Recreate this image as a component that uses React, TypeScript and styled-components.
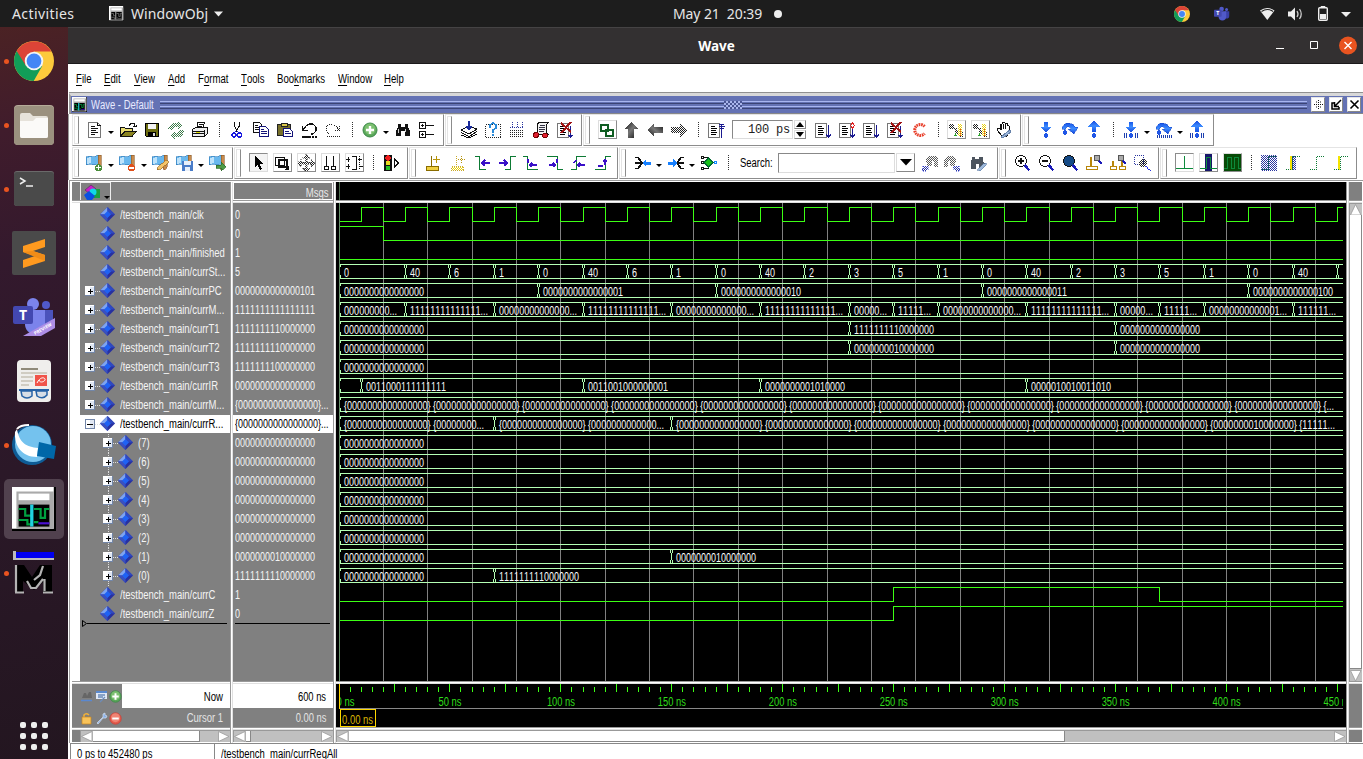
import React from "react";
import styled, { createGlobalStyle, css } from "styled-components";

const Global = createGlobalStyle`
  * { box-sizing: border-box; }
  html, body { margin: 0; padding: 0; background: #fff; overflow: hidden; }
  svg { display: block; flex: none; }
`;

const ui = css`
  font-family: "Liberation Sans", sans-serif;
  font-size: 12px;
  font-kerning: none;
  white-space: nowrap;
`;

/* Condensed text: regular letters squeezed horizontally. */
const Sq = styled.span<{ $k?: number; $right?: boolean }>`
  display: inline-block; white-space: nowrap;
  transform: scaleX(${p => p.$k ?? 0.79});
  transform-origin: ${p => (p.$right ? "right" : "left")} center;
`;

/* ---------- desktop shell ---------- */
const Screen = styled.div`
  width: 1363px; height: 759px; overflow: hidden;
  display: flex; flex-direction: column;
  font-family: "Noto Sans", sans-serif;
`;
const TopBar = styled.header`
  flex: none; height: 27px; background: #1d1d1d; color: #e6e6e6;
  display: grid; grid-template-columns: 1fr auto 1fr; align-items: center;
  font-size: 14px;
`;
const TopGroup = styled.div<{ $end?: boolean }>`
  display: flex; align-items: center; height: 27px;
  justify-content: ${p => (p.$end ? "flex-end" : "flex-start")};
`;
const Activities = styled.span`margin-left: 12px; width: 97px; letter-spacing: 0.4px;`;
const AppName = styled.span`margin: 0 5px 0 7px; letter-spacing: 0.1px;`;
const Clock = styled.div`
  display: flex; align-items: center; gap: 12px; white-space: pre; letter-spacing: -0.1px; padding-left: 93px; width: 203px;
`;
const ClockDot = styled.i`width: 8px; height: 8px; border-radius: 50%; background: #eee;`;
const TrayGap = styled.i`width: 24px;`;
const Below = styled.div`flex: 1; display: flex; min-height: 0;`;
const Dock = styled.nav`
  width: 68px; flex: none; padding-top: 2px;
  background: linear-gradient(170deg, #4b2224 0%, #401c2c 14%, #33192d 32%, #2b1828 60%, #231620 100%);
  display: flex; flex-direction: column;
`;
const DockItem = styled.div`
  height: 64px; flex: none; display: flex; align-items: center;
`;
const RunDot = styled.i<{ $on?: boolean }>`
  width: 5px; height: 5px; margin-left: 4px; border-radius: 50%; flex: none;
  background: ${p => (p.$on ? "#e95420" : "transparent")};
`;
const DockTile = styled.div<{ $active?: boolean }>`
  width: 60px; height: 60px; margin-left: -5px; border-radius: 5px;
  display: flex; align-items: center; justify-content: center;
  background: ${p => (p.$active ? "#51414e" : "transparent")};
`;
const AppsGrid = styled.div`
  margin-top: auto; margin-bottom: 9px; padding-left: 20px;
  display: grid; grid-template-columns: repeat(3, 6px); gap: 5px;
  i { width: 6px; height: 6px; border-radius: 2px; background: #eee; }
`;

/* ---------- window ---------- */
const Win = styled.main`flex: 1; min-width: 0; display: flex; flex-direction: column; background: #fff;`;
const TitleBar = styled.div`
  height: 37px; flex: none; background: #333031; border-top: 1px solid #454344; border-bottom: 1px solid #1c1a1b;
  display: grid; grid-template-columns: 1fr auto 1fr; align-items: center; color: #fff;
  font-weight: 700; font-size: 13.5px; letter-spacing: 0;
`;
const WinTitle = styled.span`padding-left: 2px;`;
const WinButtons = styled.div`display: flex; justify-content: flex-end; align-items: center; padding-right: 5px;`;
const MenuBar = styled.div`
  ${ui}
  height: 29px; flex: none; padding-left: 8px; display: flex; align-items: center; color: #000;
`;
const MenuItem = styled.div<{ $w: number }>`
  width: ${p => p.$w}px; flex: none;
  u { text-underline-offset: 2px; }
`;
const Head = styled.div`
  ${ui}
  height: 21px; flex: none; background: #6472b4; border-top: 3px solid #d8d8d8; border-bottom: 1px solid #888;
  box-shadow: 0 -1px 0 #909090; border-left: 2px solid #999;
  margin-left: 1px;
  display: flex; align-items: center; padding: 0 2px 0 1px; color: #e8ebff;
`;
const HeadTitle = styled.div`width: 67px; margin-left: 4px; flex: none;`;
const HeadGrip = styled.div`
  flex: 1; height: 8px; margin: 0 0 0 2px; display: flex; flex-direction: column; justify-content: space-between;
`;
const GripLine = styled.i`height: 3px; background: #6472b4; border-top: 1px solid #a9b6f0; border-bottom: 1px solid #3b4475;`;
const GripDots = styled.i`
  position: absolute; left: 724px; top: 101px; width: 18px; height: 8px;
  background: repeating-conic-gradient(#a9b5ec 0 25%, #4a5694 0 50%) 0 0 / 4px 4px;
`;
const HeadBtn = styled.div`
  width: 14px; height: 15px; margin-left: 4px; flex: none; background: #fff; border: 1px solid #e6e6e6; border-right-color: #888; border-bottom-color: #888;
  display: flex; align-items: center; justify-content: center;
`;
const BarRow = styled.div`height: 33px; flex: none; display: flex; padding-left: 3px; border-left: 1px solid #999;`;
const Bar = styled.div<{ $w: number; $pad: number }>`
  width: ${p => p.$w}px; flex: none; height: 32px; margin-right: 1px;
  display: flex; align-items: center; overflow: hidden;
  border: 1px solid #e4e4e4; border-right: 1px solid #8c8c8c; border-bottom: 1px solid #8c8c8c;
  padding-bottom: 1px;
  &::before {
    content: ""; flex: none; width: 3px; height: 26px; margin: 0 ${p => p.$pad - 4}px 0 1px;
    border: 1px solid #e4e4e4; border-right-color: #8c8c8c;
  }
`;
const Slot = styled.div<{ $w?: number }>`
  width: ${p => p.$w ?? 24}px; height: 26px; flex: none; display: flex; align-items: center; justify-content: center;
`;
const BoxBtn = styled.div<{ $down?: boolean }>`
  width: 19px; height: 19px; display: flex; align-items: center; justify-content: center; overflow: hidden;
  border: 1px solid; border-color: ${p => (p.$down ? "#8c8c8c #ddd #ddd #8c8c8c" : "#ddd #8c8c8c #8c8c8c #ddd")};
  background: ${p => (p.$down ? "#f4f4f4" : "#fff")};
`;
const Dots = styled.i`
  width: 1px; height: 16px; margin-left: 2px; background: repeating-linear-gradient(#333 0 1px, transparent 1px 2px);
`;
const Caret = styled.i`
  border: 3px solid transparent; border-top: 3px solid #000; border-bottom: 0; margin-top: 5px; margin-right: 1px;
`;
const TimeInput = styled.div`
  width: 61px; height: 19px; flex: none; margin-left: 4px; border: 1px solid; border-color: #888 #ddd #ddd #888;
  font: 12px/18px "Liberation Mono", monospace; text-align: right; padding-right: 2px; letter-spacing: -0.2px; color: #222;
`;
const Spin = styled.div`
  width: 12px; height: 19px; margin-left: 1px; margin-right: 5px; flex: none; display: flex; flex-direction: column; gap: 1px;
  i { flex: 1; border: 1px solid #ddd; border-right-color: #888; border-bottom-color: #888; display: flex; align-items: center; justify-content: center; }
`;
const SearchLabel = styled.label`${ui} width: 38px; margin-left: 6px; flex: none;`;
const SearchBox = styled.div`width: 117px; height: 20px; flex: none; border: 1px solid; border-color: #888 #ddd #ddd #888;`;
const SearchDrop = styled.div`
  width: 19px; height: 19px; flex: none; margin-left: 1px; margin-right: 4px; border: 1px solid; border-color: #ddd #888 #888 #ddd;
  display: flex; align-items: center; justify-content: center;
`;

/* ---------- wave panes ---------- */
const Panes = styled.div`
  height: 563px; flex: none; display: flex; padding: 1px 0 0 2px; margin-left: 1px;
  border-left: 1px solid #999; border-top: 1px solid #999;
`;
const Col = styled.section<{ $w: number }>`
  ${ui}
  width: ${p => p.$w}px; flex: none; display: flex; flex-direction: column;
`;
const Sash = styled.i`width: 3px; flex: none; background: #fff; border-left: 1px solid #999; border-right: 1px solid #e0e0e0;`;
const HSash = styled.i`height: 3px; flex: none; background: #fff; border-top: 1px solid #999; border-bottom: 1px solid #e0e0e0;`;
const ColHead = styled.div<{ $dark?: boolean; $frame?: boolean }>`
  height: 18px; flex: none; background: ${p => (p.$dark ? "#000" : "#808080")}; color: #e8e8e8;
  ${p => p.$frame && "border: 1px solid #fff; text-align: right; padding-right: 3px; line-height: 20px;"}
  display: ${p => (p.$frame ? "block" : "flex")};
`;
const HeadChip = styled.div`
  width: 31px; height: 18px; margin-left: 8px; border: 1px solid #eee; border-bottom: 0; display: flex; align-items: flex-end;
`;
const ColBody = styled.div<{ $gutter?: boolean }>`
  height: 478px; flex: none; background: #808080; padding-top: 3px;
  ${p => p.$gutter && "border-left: 8px solid #fff;"}
`;
const Row = styled.div<{ $sel?: boolean }>`
  height: 19px; display: flex; align-items: flex-start; line-height: 18px;
  color: ${p => (p.$sel ? "#000" : "#f4f4f4")};
  background: ${p => (p.$sel ? "#fff" : "transparent")};
  background-clip: content-box; padding-bottom: 1px;
`;
const Value = styled(Sq)`margin-left: 2px; flex: none;`;
const EndLine = styled.div<{ $l: number; $r: number }>`height: 1px; background: #000; margin: -1px ${p => p.$r}px 0 ${p => p.$l}px;`;
const EndMark = styled.div`display: flex; align-items: center; height: 7px; margin: -4px 3px 0 2px; i { flex: 1; height: 1px; background: #000; }`;
const Foot = styled.div`height: 43px; flex: none; background: #808080; display: flex; flex-direction: column;`;
const FootLine = styled.div<{ $white?: boolean; $h: number }>`
  height: ${p => p.$h}px; display: flex; align-items: center;
  color: ${p => (p.$white ? "#000" : "#e4e4e4")};
`;
const FootIcons = styled.div`width: 50px; height: 100%; flex: none; display: flex; align-items: center; gap: 1px; padding: 1px 0 0 8px;`;
const FootText = styled.div<{ $white?: boolean; $h: number }>`
  flex: 1; height: ${p => p.$h}px; line-height: ${p => p.$h + 2}px; text-align: right; padding-right: 7px;
  background: ${p => (p.$white ? "#fff" : "transparent")};
`;
const Scroll = styled.div<{ $vertical?: boolean }>`
  flex: ${p => (p.$vertical ? "none" : "1")}; ${p => (p.$vertical ? "height: 478px; width: 13px; flex-direction: column;" : "height: 12px;")}
  background: #c0c0c0; display: flex; border-top: 1px solid #999; border-left: 1px solid #999;
`;
const Thumb = styled.i<{ $size: number; $vertical?: boolean }>`
  flex: none; ${p => (p.$vertical ? `height: ${p.$size}px; width: 12px;` : `width: ${p.$size}px;`)}
  background: #fff; border-right: 1px solid #888; border-bottom: 1px solid #888;
`;
const ScrollRow = styled.div<{ $gutter?: boolean }>`
  height: 12px; display: flex; background: #808080; ${p => p.$gutter && "padding-left: 8px;"}
`;
const Spacer = styled.i`flex: 1;`;
const GrayBlock = styled.i<{ $h: number }>`height: ${p => p.$h}px; background: #808080; flex: none;`;
const Status = styled.footer`
  ${ui}
  flex: 1; display: flex; margin-left: 2px; border-top: 1px solid #888; border-left: 1px solid #888; line-height: 21px;
`;
const StatusCell = styled.div<{ $w?: number }>`
  ${p => (p.$w ? `width: ${p.$w}px; flex: none; border-right: 1px solid #888;` : "flex: 1;")} padding-left: 6px;
`;

/* ---------- icons ---------- */
const Ic = ({ children, w = 20 }: { children: React.ReactNode; w?: number }) => (
  <svg width={w} height={20} viewBox={`0 0 ${w} 20`} shapeRendering="crispEdges" fill="none">{children}</svg>
);
const Defs = styled.svg`position: absolute;`;
const Patterns = () => (
  <Defs width="0" height="0">
    <defs>
      {[["ck", "#222"], ["cb", "#2a35a0"], ["cr", "#e32818"], ["cg", "#3d7a4a"], ["cy", "#e8d010"]].map(([id, c]) => (
        <pattern key={id} id={id} width="2" height="2" patternUnits="userSpaceOnUse">
          <rect width="1" height="1" fill={c} /><rect x="1" y="1" width="1" height="1" fill={c} />
        </pattern>
      ))}
      <linearGradient id="steel" x1="0" y1="0" x2="1" y2="1"><stop offset="0" stopColor="#111" /><stop offset=".5" stopColor="#777" /><stop offset="1" stopColor="#111" /></linearGradient>
      <linearGradient id="blu" x1="0" y1="0" x2="0" y2="1"><stop offset="0" stopColor="#1553e8" /><stop offset=".5" stopColor="#3c8cff" /><stop offset="1" stopColor="#1546dc" /></linearGradient>
    </defs>
  </Defs>
);
const Page = ({ x = 2 }: { x?: number }) => (
  <g>
    <path d={`M${x + .5} 3.5h11v14h-11z`} fill="#fff" stroke="#777" />
    <path d={`M${x + 3} 6.5h4M${x + 3} 8.5h6M${x + 3} 10.5h5M${x + 3} 12.5h6M${x + 3} 14.5h5`} stroke="#000" />
  </g>
);
const DocI = () => <Ic><path d="M3.500 2.500h9l3 3v12h-12z" stroke="#777" fill="#fff" /><path d="M12.500 2.500v3h3M6 6.500h4M6 8.500h7M6 10.500h5M6 12.500h7M6 14.500h4" stroke="#111" /></Ic>;
const OpenI = () => <Ic><path d="M2.500 7.500h4l1 1h7v3h-8l-4 5z" fill="#e8dc70" stroke="#111" /><path d="M3 16.500l4-5h11l-4 5z" fill="#8a8420" stroke="#111" /><path d="M11 5.500l2-2h3l1 3M15 6.500h3v-2" stroke="#111" /></Ic>;
const SaveI = () => <Ic><path d="M3.500 3.500h13v13h-12l-1-1z" fill="#6d6d10" stroke="#000" /><path d="M6 4h8v5H6z" fill="#f4f4f4" /><path d="M6 12h8v4H6z" fill="#000" /><path d="M11 13h2v3h-2z" fill="#ddd" /></Ic>;
const RefreshI = () => <Ic><path d="M2 9l1-3 3-3h6V1l5 4-5 4V7H8l-2 3z" fill="url(#cg)" /><path d="M18 10l-1 4-3 3H9v2l-5-4 5-4v2h3l2-3z" fill="url(#cg)" /></Ic>;
const PrintI = () => <Ic><path d="M7.500 8V2.500h7L13 8" fill="#fff" stroke="#111" /><path d="M2.500 9.500l3-2h12v6l-3 3h-12z" fill="#eee" stroke="#111" /><path d="M3 11.500h11M3 13.500h11M14.500 10v6M9 4.500h4M8 6.500h4" stroke="#111" /><path d="M6 12h4" stroke="#dd0" /></Ic>;
const CutI = () => <Ic><path d="M7.500 2v4l2 4v2M12.500 2v4l-3 4" stroke="#111" strokeWidth="1.300" /><circle cx="7" cy="15" r="2" stroke="#1a1ae0" strokeWidth="1.600" /><circle cx="12.500" cy="15" r="2" stroke="#1a1ae0" strokeWidth="1.600" /><path d="M9 11l-2 2M10 11l2 2" stroke="#1a1ae0" /></Ic>;
const CopyI = () => <Ic><path d="M2.500 2.500h6l2 2v8h-8z" fill="#fff" stroke="#111" /><path d="M4 5.500h3M4 7.500h5M4 9.500h5" stroke="#111" /><path d="M8.500 6.500h6l3 3v7h-9z" fill="#fff" stroke="#14147a" /><path d="M10 9.500h3M10 11.500h6M10 13.500h6" stroke="#14147a" /></Ic>;
const PasteI = () => <Ic><path d="M2.500 4.500h13v11h-13z" fill="#77702a" stroke="#222" /><path d="M6 3.500h6v3H6z" fill="#ddc94a" stroke="#222" /><path d="M8.500 8.500h6l3 3v5h-9z" fill="#fff" stroke="#14147a" /><path d="M10 11.500h4M10 13.500h6" stroke="#14147a" /></Ic>;
const UndoI = () => <Ic><path d="M3.500 6v4.500h5M4 10l3-4 3-2h4l3 3v4l-3 3h-2" stroke="#111" strokeWidth="1.200" /><path d="M3 16.500h9M13 16.500h2M16 16.500h2" stroke="#111" strokeWidth="2" /></Ic>;
const RedoI = () => <Ic><path d="M16.500 6v4.500h-5M16 10l-3-4-3-2H6L3 7v4l3 3" stroke="#222" strokeDasharray="1 1" /><path d="M4 16.500h14" stroke="#222" strokeDasharray="1 1" /></Ic>;
const AddI = ({ s = 20, red = false }: { s?: number; red?: boolean }) => (
  <svg width={s} height={s} viewBox={s < 20 ? "2 2 16 16" : "0 0 20 20"}><circle cx="10" cy="10" r="7" fill={red ? "#e45b4c" : "#5aa65a"} stroke={red ? "#c8423a" : "#3c8a48"} /><circle cx="10" cy="9" r="5.500" fill={red ? "#f08474" : "#7cc070"} />
    <path d={red ? "M6 10h8" : "M6 10h8M10 6v8"} stroke="#fff" strokeWidth="2.400" /></svg>
);
const Binoc = ({ c = "#111" }: { c?: string }) => <Ic><path d="M5 4h3v3h4V4h3v3l2 4v5h-5v-5H8v5H3v-5l2-4z" fill={c} /><path d="M5 9v4M12.500 9v3" stroke="#fff" strokeWidth=".8" /></Ic>;
const ExpandI = () => <Ic><path d="M2.500 2.500h6v6h-6zM2.500 11.500h6v6h-6zM9 5.500h8M9 14.500h8M4 5.500h3M4 14.500h3M5.500 4v3M5.500 13v3" stroke="#111" /></Ic>;
const StackI = () => <Ic><path d="M2 10l8-4 8 3-8 5zM2 12.500l8 4 8-5M2 15l8 3 8-4" stroke="#111" fill="none" /><path d="M10 1v7M7.500 6l2.500 3 2.500-3" stroke="#1a2a9a" strokeWidth="2" /></Ic>;
const QueryI = () => <Ic><path d="M2.500 4.500h15v13h-15z" stroke="#222" strokeDasharray="1 1" /><path d="M7 8V5l3-2 3 2v3l-3 2v3M10 14v2" stroke="#2a8ad8" strokeWidth="1.800" /></Ic>;
const GridI = () => <Ic><path d="M3 10.500h14M3 12.500h14M3 14.500h14M3 16.500h14" stroke="#222" strokeDasharray="1 1" /><path d="M5.500 2v6M10.500 2v6M15.500 2v6" stroke="#2a35a0" strokeDasharray="1 1" /><path d="M3 7.500h14" stroke="#2a35a0" strokeDasharray="1 1" /></Ic>;
const ScrollI = () => <Ic><path d="M6.500 3.500l2-1h9l-2 2v8l2 2h-11z" fill="#f1f1f1" stroke="#111" /><path d="M9 5.500h5M8 7.500h6M8 9.500h6M8 11.500h5" stroke="#334" /><circle cx="5" cy="15" r="2.500" fill="#e02030" stroke="#700" /><circle cx="14" cy="15.500" r="2.500" fill="#e02030" stroke="#700" /></Ic>;
const DocX = () => <Ic><Page /><path d="M15.500 6v11M13.500 15l2 2.500 2-2.500" stroke="#1a1a90" /><path d="M6 3l10 9M16 2L6 13" stroke="#a01515" strokeWidth="2" /></Ic>;
const ChainI = () => <Ic><path d="M4 4.500h7v6H4zM9 9.500h7v6H9z" stroke="#0f5d22" strokeWidth="2" /></Ic>;
const ArrowI = ({ r = 0, f = "url(#steel)" }: { r?: number; f?: string }) => <Ic><g transform={`rotate(${r} 10 10)`}><path d="M10 2l7 7h-4v9H7V9H3z" fill={f} /></g></Ic>;
const DocArr = ({ up, dot }: { up?: boolean; dot?: boolean }) => (
  <Ic><Page />{up ? <path d="M15.500 4v14M12.500 6.500h6M13 4.500h5M13.500 8h4" stroke="#1a1a90" /> : <path d="M15.500 5v12M13 14.500l2.500 3 2.500-3" stroke="#1a1a90" strokeWidth="1.300" />}
    {dot && <path d="M15.500 3l2 2.500-2 2.500-2-2.500z" fill="#fff" stroke="#e02020" />}</Ic>
);
const RedC = () => <svg width="20" height="20" viewBox="0 0 20 20"><path d="M15.500 6.500A5.500 5.500 0 1 0 15.500 13.500" fill="none" stroke="#e8402c" strokeWidth="3" strokeDasharray="1.600 .7" /></svg>;
const ProbeI = () => <Ic><path d="M3 4h5v4h3v3h6v6h-3v-3H9V9H3z" fill="url(#ck)" /><path d="M12 4h4v12h-4z" fill="url(#cy)" /><path d="M8 15h3M9 13v3" stroke="#29a329" /><path d="M14.500 9v7" stroke="#d33" strokeDasharray="1 1" /></Ic>;
const HandI = () => <Ic><path d="M3 10l1-2 2 1V5l2-1V3l2-1 1 1 2 0v2l2 1v6l-2 4H8z" fill="#fff" stroke="#111" /><path d="M7.500 5v5M9.500 4v5M11.500 4v5" stroke="#111" /><path d="M7 17l6-5 3-2 1 2-3 2-5 4z" fill="#9db8dd" stroke="#6682aa" /></Ic>;
const BArrow = ({ up, bars }: { up?: boolean; bars?: boolean }) => (
  <Ic><g transform={up ? "translate(0 13) scale(1 -1)" : ""}><path d="M8 1.500h4v5h4l-6 6-6-6h4z" fill="url(#blu)" /></g>
    <circle cx="10" cy="15.500" r="2.300" fill="#1f55e6" />{bars && <path d="M3.500 13v5M5.500 13v5M14.500 13v5M16.500 13v5" stroke="#1d3fb0" />}</Ic>
);
const BLoop = ({ bars }: { bars?: boolean }) => <Ic><path d="M2 9c1-7 10-8 13-2h3l-4 7-6-5h3c-2-4-6-2-6 1z" fill="url(#blu)" stroke="#1546c8" strokeWidth=".5" /><circle cx="5" cy="12.500" r="2.200" fill="#1f55e6" />{bars && <path d="M3.500 15v3M5.500 15v3M7.500 15v3M9.500 15v3M11.500 15v3M13.500 15v3M15.500 15v3M17.500 15v3" stroke="#1d3fb0" />}</Ic>;
const MarkI = ({ kind }: { kind: "add" | "del" | "edit" | "save" | "go" }) => (
  <Ic><path d="M1 4l4-1 4 1 4-2v9l-4 1-4-1-4 1z" fill="#69b8ee" stroke="#2d78b8" strokeWidth=".6" /><path d="M2 5l4-1v6l-4 1z" fill="#bfe3fb" /><path d="M13 2h3v12l-2 3-2-1 1-4z" fill="#c88b4c" stroke="#8a5a28" strokeWidth=".6" />
    {kind === "add" && <g><circle cx="13.500" cy="14.500" r="3.500" fill="#4b8f3c" /><path d="M11 14.500h5M13.500 12v5" stroke="#fff" /></g>}
    {kind === "del" && <g><circle cx="13.500" cy="14.500" r="3.500" fill="#e0501c" /><path d="M11 14.500h5" stroke="#fff" strokeWidth="2" /></g>}
    {kind === "edit" && <path d="M6 17l1-3 8-7 3 2-8 7z" fill="#f3c46a" stroke="#9a6a20" strokeWidth=".7" />}
    {kind === "save" && <g><path d="M7 8h11v10H7z" fill="#4a7cc8" /><path d="M9 8h7v4H9zM10 14h5v4h-5z" fill="#e9f0fa" /></g>}
    {kind === "go" && <path d="M8 12h5V9l5 5-5 4v-3H8z" fill="#4e9a46" stroke="#2c6a2a" strokeWidth=".7" />}</Ic>
);
const PointerI = () => <Ic><path d="M7 3v11l2.500-2.500L12 17l2-1-2.500-5H15z" fill="#000" /></Ic>;
const ZoomModeI = () => <Ic><path d="M3.500 4.500h9v8h-9z" stroke="#111" /><path d="M7 7h8v7H7z" stroke="#111" strokeWidth="2" /><path d="M12 17h5v-5z" fill="#111" /></Ic>;
const PanI = () => <Ic><path d="M10 1l4 4h-3v4h4V6l4 4-4 4v-3h-4v4h3l-4 4-4-4h3v-4H5v3l-4-4 4-4v3h4V5H6z" fill="url(#ck)" stroke="#555" strokeWidth=".6" strokeDasharray="1 1" /></Ic>;
const TwoCur = () => <Ic><path d="M6.500 3v11M13.500 3v11M4.500 13.500h4v3h-4zM11.500 13.500h4v3h-4z" stroke="#111" /></Ic>;
const EditWave = () => <Ic><path d="M2 6.500h4M4.500 4v5M2 13.500h4M4.500 11v5M14 6.500h4M14.500 13.500h4" stroke="#111" /><path d="M7.500 3.500h5v13h-5" stroke="#111" /><path d="M15.500 3v14" stroke="#111" strokeDasharray="1 1" /></Ic>;
const Traffic = () => <Ic><path d="M3 2h8v16H3z" fill="#111" /><circle cx="7" cy="5" r="2.600" fill="#ee1c1c" /><circle cx="7" cy="10" r="2.300" fill="#e6dc20" /><circle cx="7" cy="15" r="2.300" fill="#25c025" /><path d="M13.500 6v8l4-4z" stroke="#111" fill="#fff" /></Ic>;
const BaseCur = ({ dim }: { dim?: boolean }) => <Ic><path d="M8.500 3v11M3.500 13.500h12v4h-12z" stroke={dim ? "#c9a92a" : "#8b6d00"} strokeWidth="1.600" fill="none" strokeDasharray={dim ? "1 1" : "none"} /><path d="M4 14h11v3H4z" fill={dim ? "url(#cy)" : "#f0d040"} /><path d="M10 6.500h7M13.500 3v7" stroke="#b8960c" strokeDasharray={dim ? "1 1" : "none"} /></Ic>;
const Edge = ({ d, a }: { d: string; a: string }) => <Ic><path d={d} stroke="#0d7a34" strokeWidth="1" /><path d={a} stroke="#3a10c8" strokeWidth="1.500" /></Ic>;
const JoinI = ({ flip }: { flip?: boolean }) => (
  <Ic><g transform={flip ? "translate(20 0) scale(-1 1)" : ""}><path d="M2 4.500h3l3 4v3l-3 4H2M2 10h8" stroke="#111" strokeWidth="1.700" /></g><path d={flip ? "M2 8.500h5V6l4 4-4 4v-2.500H2z" : "M18 8.500h-5V6l-4 4 4 4v-2.500h5z"} fill="#1680ff" /></Ic>
);
const NodeI = () => <Ic><path d="M2.500 3.500h2v2h-2zM2.500 8.500h2v2h-2zM2.500 14.500h2v2h-2zM5 4.500h4v3M5 9.500h4M5 15.500h4v-3M12 9.500h4" stroke="#111" /><path d="M9.500 5l4.500 4.500L9.500 14 5 9.500z" fill="#18c018" stroke="#063" /><path d="M15.500 8.500h2v2h-2z" stroke="#18f" /></Ic>;
const FindDir = ({ flip }: { flip?: boolean }) => <Ic><g transform={flip ? "translate(20 0) scale(-1 1)" : ""}><path d="M6 5l3-2h6l3 3v8h-4V8h-2v5l-5 0z" fill="url(#ck)" opacity=".75" /><path d="M3 13h5l1 3-3 2H2z" fill="url(#cb)" stroke="#2a35e0" strokeWidth=".5" strokeDasharray="1 1" /></g></Ic>;
const FindOpt = () => <Ic><path d="M4 4h3v2h4V4h4v4l2 3-2 4h-4v-4H8v5H3v-6z" fill="#4c545e" /><path d="M9 17l6-6 3-1v2l-6 6z" fill="#9fb9da" stroke="#5a7aa5" strokeWidth=".6" /></Ic>;
const Lens = ({ kind }: { kind: string }) => <Ic><circle cx="9" cy="8" r="5.500" fill={kind === "full" ? "#154a86" : "#fff"} stroke="#111" /><path d="M12.500 12l5 5.500" stroke="#1a1ab8" strokeWidth="2.500" />{kind !== "full" && <path d={kind === "in" ? "M6 8h6M9 5v6" : "M6 8h6"} stroke="#111" strokeWidth="1.800" />}</Ic>;
const LensCur = ({ two }: { two?: boolean }) => <Ic>{two ? <path d="M5 8v6M2.500 13.500h6v3h-6zM14 6v8M11.500 13.500h6v3h-6z" stroke="#b8860b" strokeWidth="1.600" /> : <path d="M7 4v9M2.500 13.500h11v3h-11z" stroke="#b8860b" strokeWidth="1.600" />}<circle cx="13" cy="5" r="3" fill="#aaa" stroke="#555" /><path d="M15 8l3 3" stroke="#1a1ab8" strokeWidth="1.500" /></Ic>;
const LensBox = () => <Ic><path d="M2.500 2.500h9v9h-9z" stroke="#2a35a0" strokeDasharray="1 1" /><circle cx="11" cy="10" r="4" fill="url(#ck)" /><path d="M14 13l4 5" stroke="#2a35e0" strokeWidth="2" strokeDasharray="1 1" /></Ic>;
const CursorWave = ({ bg, two }: { bg?: string; two?: boolean }) => <svg width="17" height="17" viewBox="0 0 17 17" shapeRendering="crispEdges" fill="none"><rect width="17" height="17" fill={two ? "#064a06" : "#fff"} />{bg && !two && <path d="M5 0h7v17H5z" fill={bg} />}<path d={two ? "M0 14.500h3v-11h4v11h3v-11h4v11h3" : bg ? "M0 14.500h6v-11h4v11h7" : "M0 14.500h17M8.500 2v13"} stroke="#0d8a3c" /></svg>;
const Step = ({ y, full, b }: { y?: boolean; full?: boolean; b?: boolean }) => <Ic>{full && <rect x="2" y="2" width="16" height="16" fill="url(#cb)" />}{b && <rect x="8" y="3" width="5" height="14" fill="url(#cb)" />}{y && <path d="M7.500 3v14" stroke="#f4e400" strokeWidth="2" />}<path d="M3 16.500h6.500v-13H17" stroke="#0d7a34" strokeDasharray="1 1" /></Ic>;

const Boxed = styled.svg<{ $bg: string }>`background: ${p => p.$bg};`;
const WaveMini = ({ s = 15, dim }: { s?: number; dim?: boolean }) => (
  <Boxed $bg="#000" width={s} height={s} viewBox="0 0 20 20">
    <path d="M0 0h19v19H0z" fill="#fff" /><path d="M2 2h17v17H2z" fill="#aaa" /><path d="M3 3h14v3H3z" fill="#fff" /><path d="M3 8h14v10H3z" fill="#000" />
    <path d="M3 10h3v3h3M3 15h4v2h2M10 10h3v4h2v-4h2M10 16h2" stroke={dim ? "#777" : "#00a040"} fill="none" strokeWidth="1" /><path d="M9 8v10" stroke={dim ? "#999" : "#20d0e0"} strokeWidth="1.500" /><path d="M12 16.500h5" stroke={dim ? "#666" : "#4a10d0"} />
  </Boxed>
);
const Chrome = ({ s }: { s: number }) => (
  <svg width={s} height={s} viewBox="0 0 40 40">
    <circle cx="20" cy="20" r="20" fill="#fdca3c" /><path d="M2.700 10a20 20 0 0 0 17 30l8.500-15L20 20l-8-1z" fill="#119d58" /><path d="M2.700 10L12 25l8-14.500h17.300A20 20 0 0 0 2.700 10z" fill="#dc4437" />
    <circle cx="20" cy="20" r="9.300" fill="#f4f4f4" /><circle cx="20" cy="20" r="7.400" fill="#4486f5" />
  </svg>
);
const Teams = ({ s, preview }: { s: number; preview?: boolean }) => (
  <svg width={s} height={s} viewBox="0 0 42 42">
    <circle cx="20" cy="8" r="6" fill={preview ? "#7b83eb" : "#5059c9"} /><circle cx="33" cy="9" r="4" fill="#5059c9" /><path d="M28 14h12v12c0 5-3 7-7 7s-6-3-6-7z" fill={preview ? "#4b53bc" : "#3a40a8"} /><path d="M12 14h20v14c0 6-4 10-10 10s-10-4-10-10z" fill={preview ? "#7b83eb" : "#5059c9"} />
    <rect x="0" y="10" width="20" height="18" rx="2" fill="#4348b0" /><text x="10" y="24" fill="#fff" textAnchor="middle" fontFamily="Open Sans" fontWeight="700" fontSize="14">T</text>
    {preview && <g><path d="M10 40L42 22v10L28 40z" fill="#ad8ee6" /><text transform="translate(22 39) rotate(-29)" fill="#fff" fontFamily="Open Sans" fontWeight="700" fontSize="4.500">PREVIEW</text></g>}
  </svg>
);
const FilesI = () => <svg width="40" height="40" viewBox="0 0 40 40"><rect width="40" height="40" rx="4" fill="#b5ab99" /><rect y="1" width="40" height="39" rx="4" fill="#9b917f" /><path d="M6 10q0-2 2-2h8l3 3h13q2 0 2 2v18q0 2-2 2H8q-2 0-2-2z" fill="#e6e2da" /><path d="M6 16h13l3-3h12v18q0 2-2 2H8q-2 0-2-2z" fill="#fbfaf8" /></svg>;
const TermI = () => <svg width="40" height="36" viewBox="0 0 40 36"><rect width="40" height="35" rx="3" fill="#6a6a6a" /><rect y="1" width="40" height="34" rx="3" fill="#4a4a4a" /><path d="M6 7l5 3-5 3M12 15h7" stroke="#eee" fill="none" strokeWidth="1.500" /></svg>;
const Sublime = () => <svg width="44" height="44" viewBox="0 0 44 44"><rect width="44" height="44" rx="2" fill="#4a4a4a" /><path d="M11 15L33 8v8l-12 4 12 4v6L11 37v-8l12-4-12-4z" fill="#ff9a1f" /><path d="M11 21l22 9v-6l-12-4z" fill="#f08c18" /></svg>;
const Evince = () => <svg width="34" height="42" viewBox="0 0 34 42"><rect width="34" height="42" rx="4" fill="#efeeec" /><path d="M4 9h17" stroke="#8f8a7a" strokeWidth="2" /><path d="M4 13h26M4 17h12M4 21h12M4 25h8" stroke="#c6c1b4" strokeWidth="1.500" /><rect x="18" y="15" width="12" height="11" fill="#f0544a" /><path d="M20 23c3-6 7-6 8-4s-5 5-6 1" stroke="#fff" fill="none" /><path d="M2 30h30" stroke="#2763a6" strokeWidth="2" /><path d="M4 31h11v5q-5 4-10 0zM19 31h11v4q-4 5-10 1z" fill="#d7dee6" stroke="#2763a6" strokeWidth="1.500" /></svg>;
const Quartus = () => <svg width="44" height="42" viewBox="0 0 44 42"><ellipse cx="20" cy="21" rx="20" ry="20" fill="#0e5c96" /><ellipse cx="21" cy="20" rx="18" ry="18" fill="#74c2ee" /><path d="M5 5c2 14 10 18 21 19l-1 9C10 33 2 22 3 8z" fill="#fff" /><path d="M27 18l17 4-2 13-17-3z" fill="#0067a8" /><path d="M5 5c3-4 8-4 12-4" stroke="#fff" strokeWidth="2" fill="none" /></svg>;
const ModelM = () => <svg width="42" height="44" viewBox="0 0 42 44"><path d="M0 0h3v8H0zM0 7h41v2H0z" fill="#bbb" /><path d="M3 1h38v6H3z" fill="#0000f0" /><path d="M4 14h7l8 12 8-12h12v28h-9V31l-9 8-11-9v12H4z" fill="#000" /><path d="M3 14v27M2 41.500h9M31.500 28v12M30 41.500h10M14 30l4 7h5l7-9M21 29l6-5 3-9" stroke="#b4b4b4" strokeWidth="2.200" fill="none" /></svg>;

const Diamond = () => <svg width="15" height="15" viewBox="0 0 15 15"><path d="M7.500 0L15 7.500 7.500 15 0 7.500z" fill="#2730a0" /><path d="M7.500 0v7.500H0z" fill="#7fa4f0" /><path d="M7.500 0L15 7.500H7.500z" fill="#3049c0" /><path d="M0 7.500h7.500V15z" fill="#3a50c0" /><path d="M7.500 4L11 7.500 7.500 11 4 7.500z" fill="#1f62f4" /></svg>;
const Toggle = ({ open }: { open?: boolean }) => <svg width="10" height="10" viewBox="0 0 10 10" shapeRendering="crispEdges"><path d="M0 0h10v10H0z" fill="#fff" /><path d="M5 1h4v8H5z" fill="#dfe6f2" /><path d="M0 9.500h10M9.500 0v10" stroke="#7286a8" /><path d={open ? "M2 5h6v1H2z" : "M3 5h5v1H3zM5 3h1v5H5z"} fill="#000" />{open && <path d="M0 0h10v1H0zM0 0h1v10H0z" fill="#7286a8" />}</svg>;

const Tree = styled.div<{ $child?: boolean }>`
  width: ${p => (p.$child ? 58 : 40)}px; padding-left: ${p => (p.$child ? 23 : 5)}px; height: 19px; flex: none;
  display: flex; padding-top: 1px;
  background: ${p => (p.$child ? "repeating-linear-gradient(#ddd 0 1px, transparent 1px 2px) 28px 0 / 1px 19px no-repeat" : "none")};
  > svg:first-child { margin-top: 3px; }
`;
const Link = styled.i<{ $on?: boolean }>`
  width: 5px; height: 1px; margin-top: 8px; background: ${p => (p.$on ? "repeating-linear-gradient(90deg, #ddd 0 1px, transparent 1px 2px)" : "none")};
`;
const NoToggle = styled.i`width: 10px;`;

/* ---------- data ---------- */
const Z16 = "0000000000000000";
const BZ = `{${Z16}}`;
type Sig = { name: string; val: string; kind: "bit" | "bus"; exp?: "+" | "-"; child?: boolean; segs: [number, string | number][] };
const zeros = (n: number) => "0".repeat(n);
const mem = Array(11).fill(BZ).join(" ") + " {...";
const A = zeros(14) + "...", B = "1".repeat(14) + "...";
const stateSeq = ["40", "6", "1", "0", "40", "6", "1", "0", "40", "2", "3", "5", "1", "0", "40", "2", "3", "5", "1", "0", "40", ""];
const clk: [number, number][] = Array.from({ length: 46 }, (_, i) => [i * 10, i % 2]);
const child = (n: number, val: string, segs: [number, string][]): Sig => ({ name: `(${n})`, val, kind: "bus", exp: "+", child: true, segs });
const signals: Sig[] = [
  { name: "/testbench_main/clk", val: "0", kind: "bit", segs: clk },
  { name: "/testbench_main/rst", val: "0", kind: "bit", segs: [[0, 1], [20, 0]] },
  { name: "/testbench_main/finished", val: "1", kind: "bit", segs: [[0, 0]] },
  { name: "/testbench_main/currSt...", val: "5", kind: "bus", segs: [[0, "0"], ...stateSeq.map((s, i) => [30 + i * 20, s] as [number, string])] },
  { name: "/testbench_main/currPC", val: "0000000000000101", kind: "bus", exp: "+", segs: [[0, Z16], [90, "0000000000000001"], [170, "0000000000000010"], [290, "0000000000000011"], [410, "0000000000000100"]] },
  { name: "/testbench_main/currM...", val: "1".repeat(16), kind: "bus", exp: "+", segs: [[0, zeros(9) + "..."], [30, B], [70, A], [110, B], [150, A], [190, B], [230, "00000..."], [250, "11111..."], [270, A], [310, B], [350, "00000..."], [370, "11111..."], [390, "00000000000001..."], [430, "111111..."]] },
  { name: "/testbench_main/currT1", val: "1111111110000000", kind: "bus", exp: "+", segs: [[0, Z16], [230, "1111111110000000"], [350, Z16]] },
  { name: "/testbench_main/currT2", val: "1111111110000000", kind: "bus", exp: "+", segs: [[0, Z16], [230, "0000000010000000"], [350, Z16]] },
  { name: "/testbench_main/currT3", val: "1111111100000000", kind: "bus", exp: "+", segs: [[0, Z16]] },
  { name: "/testbench_main/currIR", val: Z16, kind: "bus", exp: "+", segs: [[0, ""], [10, "0011000111111111"], [110, "0011001000000001"], [190, "0000000001010000"], [310, "0000010010011010"]] },
  { name: "/testbench_main/currM...", val: BZ + "...", kind: "bus", exp: "+", segs: [[0, mem]] },
  { name: "/testbench_main/currR...", val: BZ + "...", kind: "bus", exp: "-", segs: [[0, `${BZ} {00000000...`], [70, `${BZ} {${zeros(13)}...`], [150, `${Array(6).fill(BZ).join(" ")} {0000000010000000} {11111...`]] },
  child(7, Z16, [[0, Z16]]), child(6, Z16, [[0, Z16]]), child(5, Z16, [[0, Z16]]), child(4, Z16, [[0, Z16]]), child(3, Z16, [[0, Z16]]), child(2, Z16, [[0, Z16]]),
  child(1, "0000000010000000", [[0, Z16], [150, "0000000010000000"]]),
  child(0, "1111111110000000", [[0, Z16], [70, "1111111110000000"]]),
  { name: "/testbench_main/currC", val: "1", kind: "bit", segs: [[0, 0], [250, 1], [370, 0]] },
  { name: "/testbench_main/currZ", val: "0", kind: "bit", segs: [[0, 0], [250, 1]] },
];

/* ---------- wave drawing ---------- */
const PX = 2.219, ORG = 3, END = 1007;
const tx = (t: number) => (t === 0 ? ORG : Math.floor(2.93 + t * PX)) + 0.5;
const textW = (s: string) => [...s].reduce((a, c) => a + (/\d/.test(c) ? 5 : c === "." ? 2.67 : 3), 0);
const WaveText = styled.text<{ $c?: string }>`
  font-family: "Liberation Sans", sans-serif; font-size: 12px; font-kerning: none; fill: ${p => p.$c ?? "#fafafa"}; white-space: pre;
`;
const busPath = (top: number, ts: number[]) => {
  const b = top + 14;
  let d = `M${ORG + 1} ${top + .5}H${END}M${ORG + 1} ${b + .5}H${END}M${ORG + 1.5} ${top + 3}v-3M${ORG + 1.5} ${b - 3}v4`;
  ts.forEach(t => {
    const x = tx(t);
    d += `M${x - 1} ${top}v4M${x + 1} ${top}v4M${x} ${top + 4}v7M${x - 1} ${top + 11}v4M${x + 1} ${top + 11}v4`;
  });
  return d;
};
const bitPath = (top: number, segs: [number, number][]) => {
  let d = "";
  segs.forEach(([t, v], i) => {
    const y = v ? top + .5 : top + 14.5;
    d += i === 0 ? `M${ORG + 1} ${y}` : `H${tx(t)}V${y}`;
  });
  return d + `H${END}`;
};
const Waves = () => (
  <Boxed $bg="#000" width="1010" height="478" viewBox="0 0 1010 478">
    <g shapeRendering="crispEdges" fill="none">
      {Array.from({ length: 22 }, (_, i) => <path key={i} d={`M${tx((i + 1) * 20)} 0V478`} stroke="#808080" />)}
      <path d={`M${ORG + .5} 0V478`} stroke="#66906a" />
      {signals.map((s, i) => s.kind === "bit"
        ? <path key={i} d={bitPath(4 + i * 19, s.segs as [number, number][])} stroke="#3cff14" />
        : <path key={i} d={busPath(4 + i * 19, s.segs.slice(1).map(g => g[0]))} stroke="#b4ffb4" />)}
    </g>
    {signals.map((s, i) => s.kind === "bus" && s.segs.map(([t, v], j) => v !== "" &&
      <WaveText key={`${i}-${j}`} x={tx(t) + 4.500} y={17 + i * 19} textLength={textW(String(v))} lengthAdjust="spacingAndGlyphs">{v}</WaveText>))}
  </Boxed>
);
const Timeline = () => (
  <Boxed $bg="#000" width="1010" height="43" viewBox="0 0 1010 43">
    <g shapeRendering="crispEdges" fill="none">
      {Array.from({ length: 90 }, (_, i) => <path key={i} d={`M${tx((i + 1) * 5)} ${(i + 1) % 5 ? 3 : 0}V8`} stroke="#3cff14" />)}
      <path d={`M${ORG} 24.500H${END}`} stroke="#888" />
      <path d={`M${ORG + .5} 0V25`} stroke="#ffd800" />
      <path d="M4.500 25.500h35v17h-35z" stroke="#ffd800" />
    </g>
    <clipPath id="tl"><rect x="4" width="1003" height="43" /></clipPath>
    <g clipPath="url(#tl)">
      {Array.from({ length: 10 }, (_, i) => {
        const w = i === 0 ? 18 : i === 1 ? 23 : 28;
        return (
          <WaveText key={i} $c="#2fdc1a" x={i ? ORG + i * 50 * PX - w / 2 : 0.5} y={22} textLength={w} lengthAdjust="spacingAndGlyphs">{`${i * 50} ns`}</WaveText>
        );
      })}
    </g>
    <WaveText $c="#d8b400" x={6} y={40} textLength={31} lengthAdjust="spacingAndGlyphs">0.00 ns</WaveText>
  </Boxed>
);

const Arrow = ({ d }: { d: "l" | "r" | "u" | "d" }) => {
  const m = { l: "M11 0.500L.5 5.500 11 10.500z", r: "M0.500 .5L11 5.500.5 10.500z", u: "M5.500 .5L11 11H.5z", d: "M.5 .5H11L5.500 11z" }[d];
  return <svg width="12" height="11" viewBox="0 0 12 11"><path d={m} fill="#fff" stroke="#999" strokeWidth=".8" /></svg>;
};

/* label, index of the underlined letter, advance to the next item */
const menus: [string, number, number][] = [["File", 0, 28], ["Edit", 0, 30], ["View", 0, 34], ["Add", 0, 30], ["Format", 1, 43], ["Tools", 0, 36], ["Bookmarks", 3, 61], ["Window", 0, 46], ["Help", 0, 30]];
const S = ({ children, w }: { children: React.ReactNode; w?: number }) => <Slot $w={w}>{children}</Slot>;
const Sep = () => <Slot $w={13}><Dots /></Slot>;
const Drop = () => <Slot $w={9}><Caret /></Slot>;

export default function App() {
  return (
    <Screen>
      <Global />
      <Patterns />
      <TopBar>
        <TopGroup>
          <Activities>Activities</Activities>
          <WaveMini s={15} dim />
          <AppName>WindowObj</AppName>
          <svg width="11" height="6" viewBox="0 0 11 6"><path d="M1 .5h9L5.500 5.500z" fill="#eee" /></svg>
        </TopGroup>
        <Clock>{"May 21  20:39"}<ClockDot /></Clock>
        <TopGroup $end>
          <Chrome s={16} />
          <TrayGap /><Teams s={16} />
          <svg width="133" height="20" viewBox="0 0 133 20" fill="none">
            <path d="M30 6.500Q37 1.500 44.500 6.500L37.300 16z" fill="#eee" /><path d="M31.500 7.500q6-4 11.500 0" stroke="#1d1d1d" strokeWidth="1.200" />
            <path d="M58 7.500h3l4-4v13l-4-4h-3z" fill="#eee" /><path d="M67 7q2 3 0 6M69.500 5q3.500 5 0 10" stroke="#ccc" strokeWidth="1.300" />
            <path d="M91 4V2.500h4V4" stroke="#eee" /><rect x="88.700" y="3.700" width="8.600" height="12.600" rx="1" stroke="#eee" strokeWidth="1.400" /><path d="M90 10h6v5h-6z" fill="#eee" />
            <path d="M111 8h10l-5 5z" fill="#eee" />
          </svg>
        </TopGroup>
      </TopBar>
      <Below>
        <Dock>
          {[
            [<Chrome s={40} />, 1], [<FilesI />, 1], [<TermI />, 1], [<Sublime />, 0], [<Teams s={42} preview />, 0], [<Evince />, 0], [<Quartus />, 1],
            [<WaveMini s={44} />, 1, 1], [<ModelM />, 1],
          ].map(([ic, on, act], i) => (
            <DockItem key={i}><RunDot $on={!!on} /><DockTile $active={!!act}>{ic as React.ReactNode}</DockTile></DockItem>
          ))}
          <AppsGrid>{Array.from({ length: 9 }, (_, i) => <i key={i} />)}</AppsGrid>
        </Dock>
        <Win>
          <TitleBar>
            <span />
            <WinTitle>Wave</WinTitle>
            <WinButtons>
              <svg width="90" height="20" viewBox="0 0 90 20" fill="none">
                <path d="M8 12.500h8" stroke="#fff" /><path d="M42.500 5.500h7v7h-7z" stroke="#fff" /><circle cx="80" cy="9.500" r="9" fill="#e95420" /><path d="M76.500 6l7 7M83.500 6l-7 7" stroke="#fff" strokeWidth="1.400" />
              </svg>
            </WinButtons>
          </TitleBar>
          <MenuBar>
            {menus.map(([m, u, w]) => <MenuItem key={m} $w={w}><Sq $k={0.8}>{m.slice(0, u)}<u>{m[u]}</u>{m.slice(u + 1)}</Sq></MenuItem>)}
          </MenuBar>
          <Head>
            <WaveMini s={15} /><HeadTitle><Sq>Wave - Default</Sq></HeadTitle>
            <HeadGrip><GripLine /><GripLine /></HeadGrip>
            <GripDots />
            <HeadBtn><svg width="11" height="11" viewBox="0 0 11 11"><path d="M5.500 1v9M1 5.500h9M3 3h1M7 3h1M3 8h1M7 8h1" stroke="#111" strokeDasharray="1 1" /></svg></HeadBtn>
            <HeadBtn><svg width="11" height="11" viewBox="0 0 11 11"><path d="M3 4H1v6h7V8M10 1L4 7M3.500 3v4.500H8" stroke="#000" strokeWidth="1.500" fill="none" /></svg></HeadBtn>
            <HeadBtn><svg width="11" height="11" viewBox="0 0 11 11"><path d="M1.500 1.500l8 8M9.500 1.500l-8 8" stroke="#000" strokeWidth="1.600" /></svg></HeadBtn>
          </Head>
          <BarRow>
            <Bar $w={372} $pad={8}>
              <S><DocI /></S><Drop /><S><OpenI /></S><S><SaveI /></S><S><RefreshI /></S><S><PrintI /></S><Sep />
              <S><CutI /></S><S><CopyI /></S><S><PasteI /></S><S><UndoI /></S><S><RedoI /></S><Sep />
              <S><AddI /></S><Drop /><S><Binoc /></S><S><ExpandI /></S>
            </Bar>
            <Bar $w={137} $pad={9}>
              <S><StackI /></S><S><QueryI /></S><S><GridI /></S><S><ScrollI /></S><S><DocX /></S>
            </Bar>
            <Bar $w={438} $pad={9}>
              <S><BoxBtn><ChainI /></BoxBtn></S><S><ArrowI /></S><S><ArrowI r={-90} /></S><S><ArrowI r={90} f="url(#ck)" /></S><Sep /><S><DocArr up /></S>
              <TimeInput>100 ps</TimeInput>
              <Spin><i><svg width="8" height="5" viewBox="0 0 8 5"><path d="M4 0l4 5H0z" /></svg></i><i><svg width="8" height="5" viewBox="0 0 8 5"><path d="M4 5l4-5H0z" /></svg></i></Spin>
              <S><DocArr /></S><S><DocArr dot /></S><S><DocArr /></S><S><DocX /></S><S><RedC /></S><Sep />
              <S><BoxBtn><ProbeI /></BoxBtn></S><S><BoxBtn><ProbeI /></BoxBtn></S><S><HandI /></S>
            </Bar>
            <Bar $w={192} $pad={9}>
              <S><BArrow /></S><S><BLoop /></S><S><BArrow up /></S><Sep /><S><BArrow bars /></S><Drop /><S><BLoop bars /></S><Drop /><S><BArrow up bars /></S>
            </Bar>
          </BarRow>
          <BarRow>
            <Bar $w={161} $pad={8}>
              <S><MarkI kind="add" /></S><Drop /><S><MarkI kind="del" /></S><Drop /><S><MarkI kind="edit" /></S><S><MarkI kind="save" /></S><Drop /><S><MarkI kind="go" /></S>
            </Bar>
            <Bar $w={174} $pad={9}>
              <S><BoxBtn $down><PointerI /></BoxBtn></S><S><BoxBtn><ZoomModeI /></BoxBtn></S><S><BoxBtn><PanI /></BoxBtn></S><S><BoxBtn><TwoCur /></BoxBtn></S><S><BoxBtn><EditWave /></BoxBtn></S><Sep /><S><Traffic /></S>
            </Bar>
            <Bar $w={209} $pad={9}>
              <S><BaseCur /></S><S w={26}><BaseCur dim /></S>
              <S><Edge d="M2 3.500h4.500v13h6" a="M9 10h8M12 7l-3 3 3 3" /></S>
              <S><Edge d="M8 16.500h5.500v-13h5" a="M2 10h8M7 7l3 3-3 3" /></S>
              <S><Edge d="M2 3.500h4.500v13h10.500" a="M9 12h7M11 10l-2 2 2 2M7 6v4" /></S>
              <S><Edge d="M2 3.500h10.500v13h5" a="M4 12h6M8 10l2 2-2 2M12 6v4" /></S>
              <S><Edge d="M2 16.500h5.500v-13h9.500" a="M9 12h7M11 10l-2 2 2 2M7 7l-2 3" /></S>
              <S><Edge d="M2 16.500h10.500v-13h5" a="M5 13h5M12 7v5M10 9l2-2 2 2" /></S>
            </Bar>
            <Bar $w={379} $pad={9}>
              <S><JoinI /></S><Drop /><S><JoinI flip /></S><Drop /><S><NodeI /></S><Sep />
              <SearchLabel><Sq>Search:</Sq></SearchLabel><SearchBox />
              <SearchDrop><svg width="12" height="7" viewBox="0 0 12 7"><path d="M0 0h12L6 6.500z" /></svg></SearchDrop>
              <S w={22}><FindDir /></S><S w={22}><FindDir flip /></S><S w={30}><FindOpt /></S>
            </Bar>
            <Bar $w={160} $pad={8}>
              <S><Lens kind="in" /></S><S><Lens kind="out" /></S><S><Lens kind="full" /></S><S><LensCur /></S><S><LensCur two /></S><S><LensBox /></S>
            </Bar>
            <Bar $w={197} $pad={9}>
              <S><BoxBtn $down><CursorWave /></BoxBtn></S><S><BoxBtn><CursorWave bg="#16166a" /></BoxBtn></S><S><BoxBtn><CursorWave two /></BoxBtn></S><Sep />
              <S><Step full /></S><S><Step y b /></S><S><Step /></S><S><Step y /></S>
            </Bar>
          </BarRow>
          <Panes>
            <Col $w={158}>
              <ColHead>
                <HeadChip><svg width="29" height="16" viewBox="0 0 29 16"><path d="M4 6l6-5 5 4-6 5z" fill="#c81ec8" stroke="#402040" strokeWidth=".5" /><path d="M10 5h9v9h-7z" fill="#1aa040" /><circle cx="12" cy="8" r="3.500" fill="#10d8e8" /><path d="M3 11l5-4 6 5-3 4H6z" fill="#0a50e0" /><path d="M23 12h6l-3 3z" /></svg></HeadChip>
              </ColHead>
              <HSash />
              <ColBody $gutter>
                {signals.map((s, i) => (
                  <Row key={i} $sel={s.exp === "-"}>
                    <Tree $child={s.child}>
                      {s.exp ? <Toggle open={s.exp === "-"} /> : <NoToggle />}
                      <Link $on={!!s.exp} /><Diamond />
                    </Tree>
                    <Sq>{s.name}</Sq>
                  </Row>
                ))}
                <EndMark><svg width="5" height="7" viewBox="0 0 5 7"><path d="M.5 .5v6l4-3z" fill="none" stroke="#000" /></svg><i /></EndMark>
              </ColBody>
              <HSash />
              <Foot>
                <FootLine $white $h={24}>
                  <FootIcons>
                    <svg width="13" height="13" viewBox="0 0 13 13"><path d="M2 8l2-5h2l1 3 2-4h2l1 6z" fill="#666" /><path d="M1 10.500h11" stroke="#5a88d0" strokeWidth="1.500" /></svg>
                    <svg width="14" height="13" viewBox="0 0 14 13"><path d="M2 1h11v8H2z" fill="#dfe8f6" /><path d="M2 1h11v2H2z" fill="#5a8ad0" /><path d="M4 5h7M4 7h5M6 12l5-5" stroke="#6c8cba" strokeWidth="1.300" /></svg>
                    <AddI s={13} />
                  </FootIcons>
                  <FootText $white $h={24}><Sq $right $k={0.8}>Now</Sq></FootText>
                </FootLine>
                <FootLine $h={19}>
                  <FootIcons>
                    <svg width="13" height="13" viewBox="0 0 13 13"><path d="M4 6V3q2-2.500 5 0" stroke="#f0b03a" strokeWidth="1.600" fill="none" /><path d="M2 5h9v7H2z" fill="#f9c35a" stroke="#c88820" strokeWidth=".7" /></svg>
                    <svg width="14" height="13" viewBox="0 0 14 13"><path d="M3 11l6-6V2l2-1v2l2 1-1 2H9l-5 6z" fill="#8ab0e6" stroke="#d5e2f4" strokeWidth=".7" /></svg>
                    <AddI s={13} red />
                  </FootIcons>
                  <FootText $h={19}><Sq $right>Cursor 1</Sq></FootText>
                </FootLine>
              </Foot>
              <HSash />
              <ScrollRow $gutter><Scroll><Arrow d="l" /><Thumb $size={107} /><Spacer /><Arrow d="r" /></Scroll></ScrollRow>
            </Col>
            <Sash />
            <Col $w={100}>
              <ColHead $frame><Sq $right $k={0.8}>Msgs</Sq></ColHead>
              <HSash />
              <ColBody>
                {signals.map((s, i) => <Row key={i} $sel={s.exp === "-"}><Value $k={0.75}>{s.val}</Value></Row>)}
                <EndLine $l={2} $r={3} />
              </ColBody>
              <HSash />
              <Foot>
                <FootLine $white $h={24}><FootText $white $h={24}><Sq $right $k={0.78}>600 ns</Sq></FootText></FootLine>
                <FootLine $h={19}><FootText $h={19}><Sq $right $k={0.78}>0.00 ns</Sq></FootText></FootLine>
              </Foot>
              <HSash />
              <ScrollRow><Scroll><Arrow d="l" /><Thumb $size={5} /><Spacer /><Arrow d="r" /></Scroll></ScrollRow>
            </Col>
            <Sash />
            <Col $w={1010}>
              <ColHead $dark><svg width="10" height="18"><path d="M3.500 0v18" stroke="#4c6b4e" shapeRendering="crispEdges" /></svg></ColHead>
              <HSash />
              <Waves />
              <HSash />
              <Timeline />
              <HSash />
              <ScrollRow><Scroll><Arrow d="l" /><Thumb $size={716} /><Spacer /><Arrow d="r" /></Scroll></ScrollRow>
            </Col>
            <Sash />
            <Col $w={13}>
              <ColHead />
              <HSash />
              <Scroll $vertical><Arrow d="u" /><Thumb $vertical $size={454} /><Spacer /><Arrow d="d" /></Scroll>
              <HSash />
              <GrayBlock $h={43} />
              <HSash />
              <GrayBlock $h={12} />
            </Col>
          </Panes>
          <Status>
            <StatusCell $w={144}><Sq>0 ps to 452480 ps</Sq></StatusCell>
            <StatusCell><Sq>/testbench_main/currRegAll</Sq></StatusCell>
          </Status>
        </Win>
      </Below>
    </Screen>
  );
}
